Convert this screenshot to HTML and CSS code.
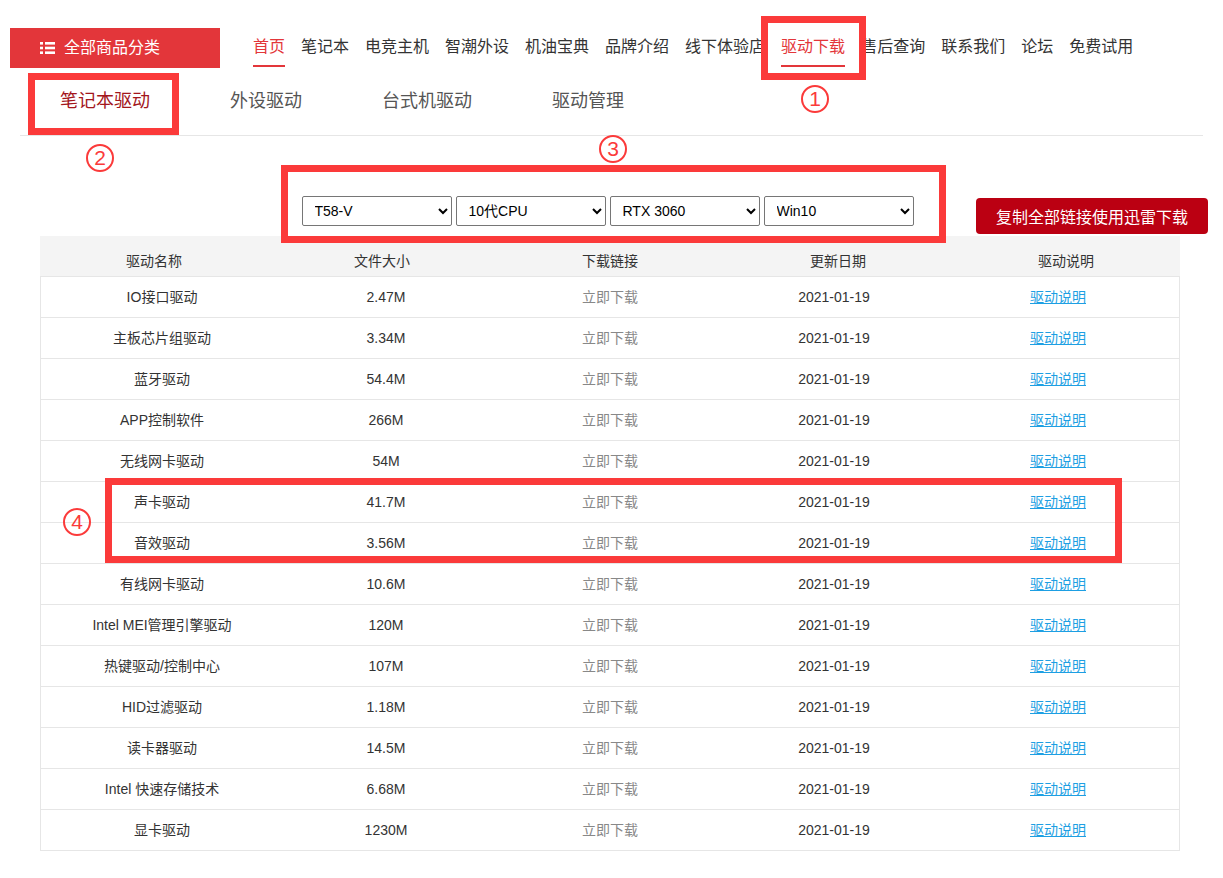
FILE: index.html
```html
<!DOCTYPE html>
<html lang="zh-CN">
<head>
<meta charset="utf-8">
<title>驱动下载</title>
<link rel="stylesheet" href="styles.css">
</head>
<body>
<div class="page">
  <header class="topbar">
    <div class="cat-btn">
      <svg class="cat-icon" width="15" height="12" viewBox="0 0 15 12">
        <rect x="0" y="0" width="3" height="2.6" fill="#fff"/>
        <rect x="5" y="0" width="10" height="2.6" fill="#fff"/>
        <rect x="0" y="4.7" width="3" height="2.6" fill="#fff"/>
        <rect x="5" y="4.7" width="10" height="2.6" fill="#fff"/>
        <rect x="0" y="9.4" width="3" height="2.6" fill="#fff"/>
        <rect x="5" y="9.4" width="10" height="2.6" fill="#fff"/>
      </svg>
      <span>全部商品分类</span>
    </div>
    <nav class="main-nav">
      <a class="nav-item active">首页</a>
      <a class="nav-item">笔记本</a>
      <a class="nav-item">电竞主机</a>
      <a class="nav-item">智潮外设</a>
      <a class="nav-item">机油宝典</a>
      <a class="nav-item">品牌介绍</a>
      <a class="nav-item">线下体验店</a>
      <a class="nav-item active">驱动下载</a>
      <a class="nav-item">售后查询</a>
      <a class="nav-item">联系我们</a>
      <a class="nav-item">论坛</a>
      <a class="nav-item">免费试用</a>
    </nav>
  </header>

  <div class="tabs">
    <a class="tab active">笔记本驱动</a>
    <a class="tab">外设驱动</a>
    <a class="tab">台式机驱动</a>
    <a class="tab">驱动管理</a>
  </div>

  <div class="filter">
    <div class="filter-side"></div>
    <div class="selects">
      <select class="sel"><option>T58-V</option></select>
      <select class="sel"><option>10代CPU</option></select>
      <select class="sel"><option>RTX 3060</option></select>
      <select class="sel"><option>Win10</option></select>
    </div>
    <div class="filter-side right">
      <button class="copy-btn">复制全部链接使用迅雷下载</button>
    </div>
  </div>

  <div class="table">
    <div class="thead">
      <div>驱动名称</div><div>文件大小</div><div>下载链接</div><div>更新日期</div><div>驱动说明</div>
    </div>
    <div class="tbody">
      <div class="row"><div>IO接口驱动</div><div>2.47M</div><div class="dl">立即下载</div><div>2021-01-19</div><div><a class="link">驱动说明</a></div></div>
      <div class="row"><div>主板芯片组驱动</div><div>3.34M</div><div class="dl">立即下载</div><div>2021-01-19</div><div><a class="link">驱动说明</a></div></div>
      <div class="row"><div>蓝牙驱动</div><div>54.4M</div><div class="dl">立即下载</div><div>2021-01-19</div><div><a class="link">驱动说明</a></div></div>
      <div class="row"><div>APP控制软件</div><div>266M</div><div class="dl">立即下载</div><div>2021-01-19</div><div><a class="link">驱动说明</a></div></div>
      <div class="row"><div>无线网卡驱动</div><div>54M</div><div class="dl">立即下载</div><div>2021-01-19</div><div><a class="link">驱动说明</a></div></div>
      <div class="row"><div>声卡驱动</div><div>41.7M</div><div class="dl">立即下载</div><div>2021-01-19</div><div><a class="link">驱动说明</a></div></div>
      <div class="row"><div>音效驱动</div><div>3.56M</div><div class="dl">立即下载</div><div>2021-01-19</div><div><a class="link">驱动说明</a></div></div>
      <div class="row"><div>有线网卡驱动</div><div>10.6M</div><div class="dl">立即下载</div><div>2021-01-19</div><div><a class="link">驱动说明</a></div></div>
      <div class="row"><div>Intel MEI管理引擎驱动</div><div>120M</div><div class="dl">立即下载</div><div>2021-01-19</div><div><a class="link">驱动说明</a></div></div>
      <div class="row"><div>热键驱动/控制中心</div><div>107M</div><div class="dl">立即下载</div><div>2021-01-19</div><div><a class="link">驱动说明</a></div></div>
      <div class="row"><div>HID过滤驱动</div><div>1.18M</div><div class="dl">立即下载</div><div>2021-01-19</div><div><a class="link">驱动说明</a></div></div>
      <div class="row"><div>读卡器驱动</div><div>14.5M</div><div class="dl">立即下载</div><div>2021-01-19</div><div><a class="link">驱动说明</a></div></div>
      <div class="row"><div>Intel 快速存储技术</div><div>6.68M</div><div class="dl">立即下载</div><div>2021-01-19</div><div><a class="link">驱动说明</a></div></div>
      <div class="row"><div>显卡驱动</div><div>1230M</div><div class="dl">立即下载</div><div>2021-01-19</div><div><a class="link">驱动说明</a></div></div>
    </div>
  </div>

  <div class="mark box1"></div>
  <div class="mark box2"></div>
  <div class="mark box3"></div>
  <div class="mark box4"></div>
  <div class="num num1">1</div>
  <div class="num num2">2</div>
  <div class="num num3">3</div>
  <div class="num num4">4</div>
</div>
</body>
</html>
```

FILE: styles.css
```css
* { box-sizing: border-box; }

body {
  margin: 0;
  background: #fff;
  font-family: "Liberation Sans", "Noto Sans CJK SC", sans-serif;
  color: #333;
}

.page {
  position: relative;
  width: 1223px;
  min-height: 878px;
}

/* ---------- top bar ---------- */
.topbar {
  display: flex;
  align-items: flex-start;
  height: 68px;
}

.cat-btn {
  margin: 28px 0 0 10px;
  width: 210px;
  height: 40px;
  background: #e3363a;
  color: #fff;
  display: flex;
  align-items: center;
  padding-left: 30px;
  font-size: 16px;
  line-height: 40px;
}

.cat-icon {
  display: block;
  margin-right: 9px;
}

.main-nav {
  display: flex;
  gap: 16px;
  margin: 28px 0 0 33px;
}

.nav-item {
  font-size: 16px;
  line-height: 37px;
  color: #333;
  border-bottom: 2px solid transparent;
  white-space: nowrap;
}

.nav-item.active {
  color: #e3363a;
  border-bottom-color: #e3363a;
}

/* ---------- tabs ---------- */
.tabs {
  display: flex;
  margin: 0 20px;
  padding: 13px 0 14px;
  border-bottom: 1px solid #e6e6e6;
}

.tab {
  padding: 0 40px;
  font-size: 18px;
  line-height: 40px;
  color: #555;
}

.tab.active {
  color: #a3161c;
}

/* ---------- filter ---------- */
.filter {
  display: grid;
  grid-template-columns: 1fr auto 1fr;
  height: 100px;
  padding-top: 60px;
}

.selects {
  display: flex;
  gap: 4px;
  margin-left: -8px;
}

.sel {
  width: 150px;
  height: 30px;
  padding-left: 8px;
  font-family: "Liberation Sans", "Noto Sans CJK SC", sans-serif;
  font-size: 14px;
  color: #000;
  background: #fff;
  border: 1px solid #767676;
  border-radius: 2px;
}

.filter-side.right {
  display: flex;
  justify-content: flex-end;
  padding-right: 15px;
}

.copy-btn {
  margin-top: 2px;
  width: 232px;
  height: 36px;
  border: none;
  border-radius: 4px;
  background: #bb0012;
  color: #fff;
  font-family: "Noto Sans CJK SC", sans-serif;
  font-size: 16px;
  padding: 0;
}

/* ---------- table ---------- */
.table {
  margin-left: 40px;
  width: 1140px;
  font-size: 14px;
}

.thead {
  display: grid;
  grid-template-columns: repeat(5, 1fr);
  background: #f4f4f4;
  height: 41px;
  padding-top: 10px;
  line-height: 30px;
  border-bottom: 1px solid #e6e6e6;
  text-align: center;
  color: #333;
}

.tbody {
  border-left: 1px solid #e6e6e6;
  border-right: 1px solid #e6e6e6;
}

.row {
  display: grid;
  grid-template-columns: repeat(5, 1fr);
  padding: 0 9px;
  height: 41px;
  line-height: 40px;
  border-bottom: 1px solid #e6e6e6;
  text-align: center;
  color: #333;
}

.dl {
  color: #888;
}

.link {
  color: #1d9fe3;
  text-decoration: underline;
}

/* ---------- annotations (overlay) ---------- */
.mark {
  position: absolute;
  border: 7px solid #fb3a3a;
  pointer-events: none;
}

.box1 { left: 761px; top: 16px; width: 105px; height: 64px; }
.box2 { left: 28px;  top: 73px; width: 151px; height: 62px; }
.box3 { left: 281px; top: 165px; width: 665px; height: 78px; }
.box4 { left: 105px; top: 478px; width: 1017px; height: 85px; }

.num {
  position: absolute;
  width: 28px;
  height: 28px;
  border: 2px solid #fb3a3a;
  border-radius: 50%;
  color: #fb3a3a;
  font-family: "Liberation Sans", sans-serif;
  font-size: 21px;
  line-height: 24px;
  text-align: center;
}

.num1 { left: 801px; top: 85px; }
.num2 { left: 86px;  top: 144px; }
.num3 { left: 599px; top: 135px; }
.num4 { left: 63px;  top: 508px; }
```
